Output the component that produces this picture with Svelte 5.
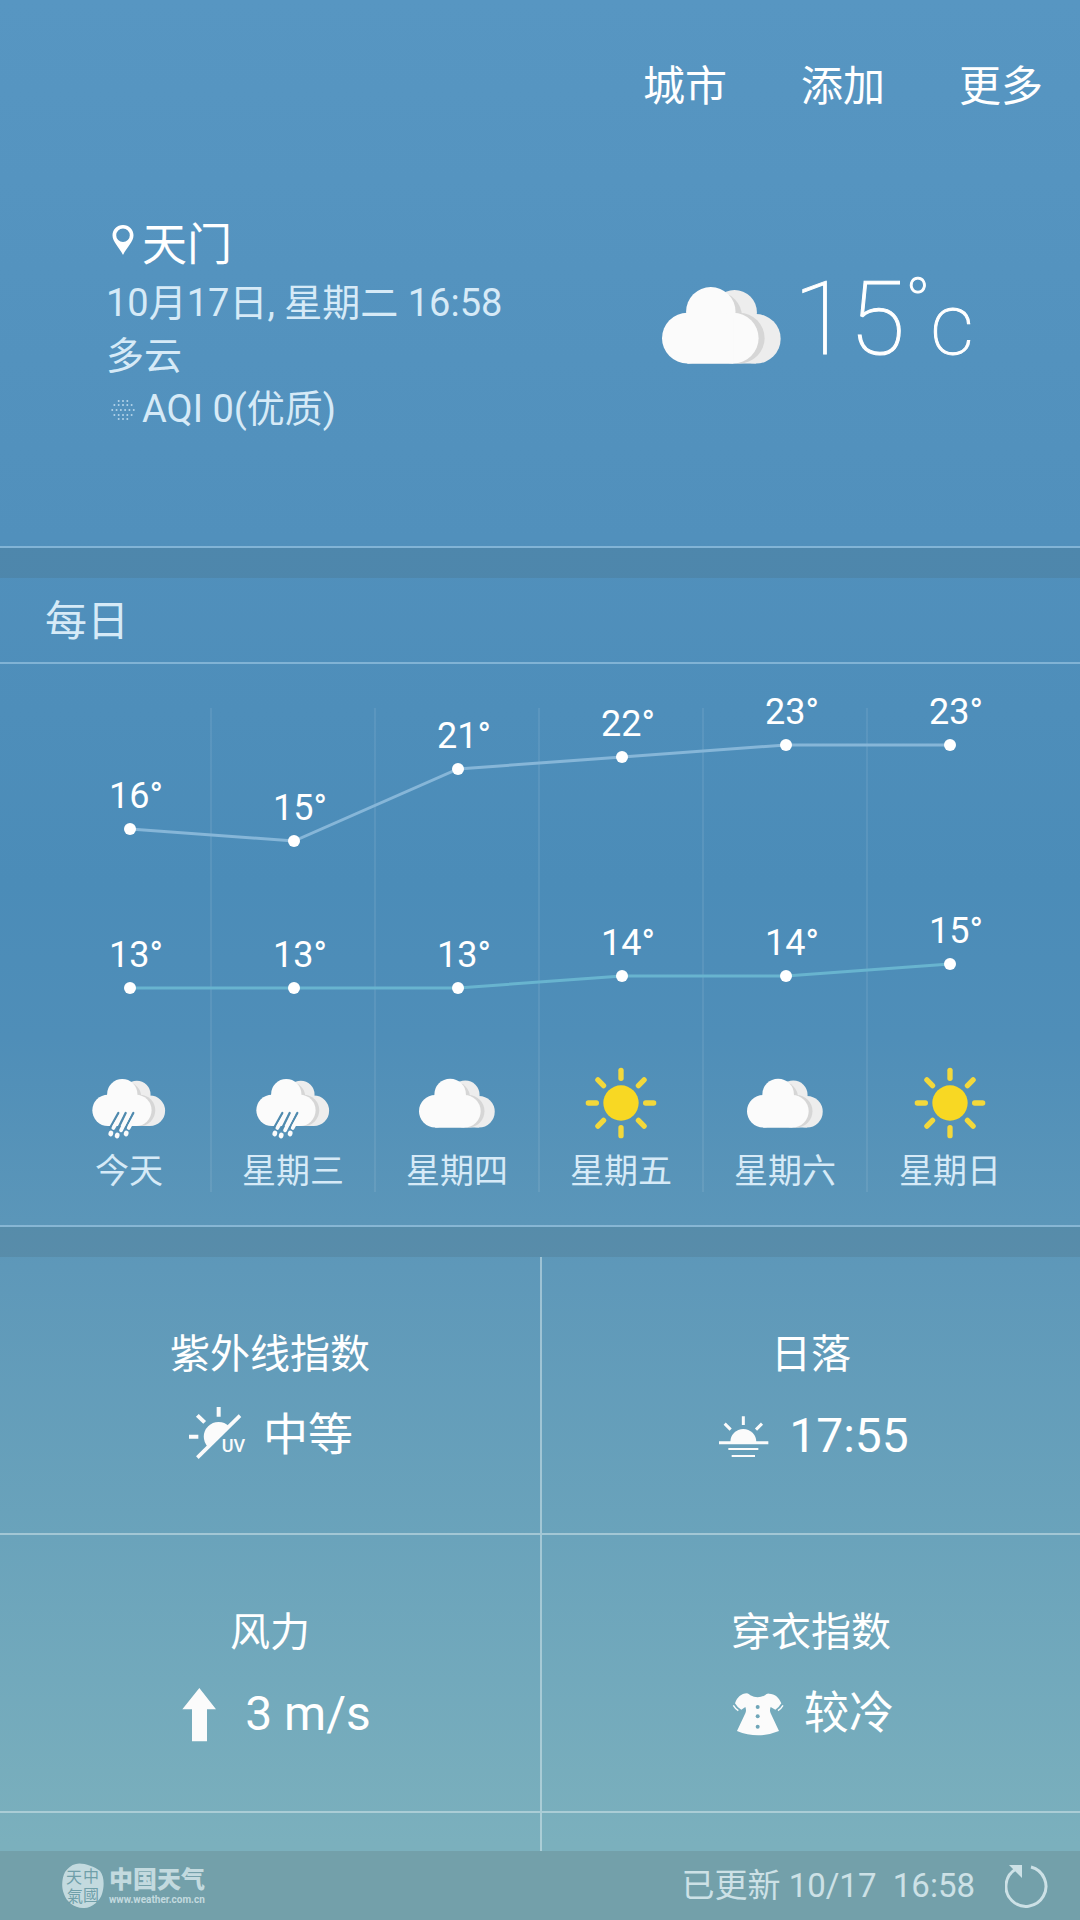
<script lang="ts">
  type Icon = 'rain' | 'cloud' | 'sun';

  const menu = ['城市', '添加', '更多'];

  const days: { name: string; icon: Icon; high: number; low: number }[] = [
    { name: '今天', icon: 'rain', high: 16, low: 13 },
    { name: '星期三', icon: 'rain', high: 15, low: 13 },
    { name: '星期四', icon: 'cloud', high: 21, low: 13 },
    { name: '星期五', icon: 'sun', high: 22, low: 14 },
    { name: '星期六', icon: 'cloud', high: 23, low: 14 },
    { name: '星期日', icon: 'sun', high: 23, low: 15 },
  ];

  const details = [
    { title: '紫外线指数', value: '中等', icon: 'uv', latin: false },
    { title: '日落', value: '17:55', icon: 'sunset', latin: true },
    { title: '风力', value: '3 m/s', icon: 'wind', latin: true },
    { title: '穿衣指数', value: '较冷', icon: 'clothes', latin: false },
  ];

  // chart geometry, in viewBox units
  const COL = 164;
  const STEP = 12;
  const x = (i: number) => COL * i + COL / 2;
  const highY = (t: number) => 165 - (t - 16) * STEP;
  const lowY = (t: number) => 324 - (t - 13) * STEP;
  const highLine = days.map((d, i) => `${x(i)},${highY(d.high)}`).join(' ');
  const lowLine = days.map((d, i) => `${x(i)},${lowY(d.low)}`).join(' ');

  // rows of the air quality dot matrix: [y, dots in the row]
  const dotRows = [[3, 3], [7, 5], [12, 6], [17, 5], [21, 3]];
</script>

{#snippet cloud()}
  <g fill="#ededed">
    <circle cx="217" cy="76" r="67" />
    <circle cx="281" cy="155" r="74" />
    <rect x="76" y="140" width="205" height="89" />
  </g>
  <g fill="#d6d6d6">
    <circle cx="166" cy="88" r="73" />
    <circle cx="231" cy="153" r="76" />
  </g>
  <g fill="#fbfbfb">
    <circle cx="146" cy="74" r="74" />
    <circle cx="76" cy="153" r="76" />
    <circle cx="213" cy="153" r="76" />
    <rect x="76" y="90" width="137" height="139" />
  </g>
{/snippet}

{#snippet dayIcon(icon: Icon)}
  <svg class="day-icon" viewBox="0 0 228 216" aria-hidden="true">
    {#if icon === 'sun'}
      <circle cx="114" cy="108" r="53" fill="#f8d823" />
      {#each [0, 45, 90, 135, 180, 225, 270, 315] as angle}
        <line x1="114" y1="10" x2="114" y2="34" stroke="#f3d83b" stroke-width="16" stroke-linecap="round" transform="rotate({angle} 114 108)" />
      {/each}
    {:else if icon === 'cloud'}
      <g transform="translate(0 35) scale(0.64)">{@render cloud()}</g>
    {:else}
      <g transform="translate(4 36) scale(0.615)">{@render cloud()}</g>
      <g fill="none" stroke-linecap="round">
        <path d="M82 138 57 183M104 138 80 187M127 138 103 183" stroke="#4f8aae" stroke-width="7" />
        <g stroke="#fbfbfb">
          <path d="M91 142 67 183M114 142 90 190M136 142 113 183" stroke-width="11" />
          <path d="M60 198 59 201M79 204 78 207M106 198 105 201" stroke-width="14" />
        </g>
      </g>
    {/if}
  </svg>
{/snippet}

<div class="app">
  <main>
    <section class="hero">
      <nav>
        {#each menu as item}
          <button type="button">{item}</button>
        {/each}
      </nav>
      <div class="current">
        <div class="info">
          <h1>
            <svg class="mark" viewBox="0 0 24 42" aria-hidden="true">
              <path fill="#fff" fill-rule="evenodd" d="M12 0C6 0 1.500 4.600 1.500 10.300 1.500 17 8 22 12 30 16 22 22.500 17 22.500 10.300 22.500 4.600 18 0 12 0ZM12 3.500A6.800 6.800 0 1 1 12 17.100 6.800 6.800 0 0 1 12 3.500Z" />
            </svg>
            天门
          </h1>
          <p>10月17日, 星期二 16:58</p>
          <p>多云</p>
          <p class="aqi">
            <svg class="mark" viewBox="0 0 24 24" aria-hidden="true">
              {#each dotRows as [y, count]}
                {#each Array(count) as _, i}
                  <circle cx={12 + (i - (count - 1) / 2) * 4.3} cy={y} r="1" fill="#b4d4ea" />
                {/each}
              {/each}
            </svg>
            AQI 0(优质)
          </p>
        </div>
        <div class="now">
          <svg class="now-icon" viewBox="0 0 356 230" role="img" aria-label="多云">{@render cloud()}</svg>
          <div class="temp">15<sup>°</sup><span>c</span></div>
        </div>
      </div>
    </section>

    <section class="daily">
      <h2>每日</h2>
      <div class="forecast">
        <svg class="chart" viewBox="0 0 984 384" role="img" aria-label="每日">
          {#each days.slice(1) as _, i}
            <line class="rule" x1={COL * (i + 1) - 1} y1="44" x2={COL * (i + 1) - 1} y2="384" />
          {/each}
          <polyline class="high" points={highLine} />
          <polyline class="low" points={lowLine} />
          {#each days as day, i}
            <circle cx={x(i)} cy={highY(day.high)} r="6" />
            <circle cx={x(i)} cy={lowY(day.low)} r="6" />
            <text x={x(i) + 6} y={highY(day.high) - 21}>{day.high}°</text>
            <text x={x(i) + 6} y={lowY(day.low) - 21}>{day.low}°</text>
          {/each}
        </svg>
        <div class="days">
          {#each days as day}
            <div class="day">
              {@render dayIcon(day.icon)}
              <span>{day.name}</span>
            </div>
          {/each}
        </div>
      </div>
    </section>

    <section class="details">
      {#each details as item}
        <div class="cell">
          <h3>{item.title}</h3>
          <div class="value" class:latin={item.latin}>
            {#if item.icon === 'uv'}
              <svg viewBox="111 285 180 180" fill="none" stroke="#fbfbfb" aria-hidden="true">
                <path d="M174 408A44 44 0 0 1 237 346Z" fill="#fbfbfb" stroke="none" />
                <path d="M142 440 270 314" stroke-width="11" />
                <path d="M206 288V317M142 313 164 334M117 377H145" stroke-width="12" />
                <text x="215" y="424">UV</text>
              </svg>
            {:else if item.icon === 'sunset'}
              <svg viewBox="72 285 180 180" fill="none" stroke="#fbfbfb" aria-hidden="true">
                <path d="M124 393A39 39 0 0 1 202 393Z" fill="#fbfbfb" stroke="none" />
                <path d="M90 395H238M163 316V342M107 338 125 356M219 338 201 356" stroke-width="9" />
                <path d="M118 414H208M128 435H198" stroke-width="6" />
              </svg>
            {:else if item.icon === 'wind'}
              <svg viewBox="57 279 180 180" aria-hidden="true">
                <polygon points="148,291 198,355 171,355 171,451 126,451 126,355 97,355" fill="#fbfbfb" />
              </svg>
            {:else}
              <svg viewBox="85 279 180 180" aria-hidden="true">
                <path d="M142 307Q148 308 152 313 174 325 196 313 201 307 208 308C226 309 237 318 245 337Q238 349 227 356L213 348Q209 358 213 367L238 420Q175 446 112 420L137 367Q141 358 137 348L125 356Q113 350 106 337C113 318 124 308 142 307Z" fill="#fbfbfb" />
                <path d="M101 343Q106 352 116 359M250 343Q245 352 235 359" fill="none" stroke="#fbfbfb" stroke-width="4" />
                <g fill="#6fa6b9">
                  <circle cx="174" cy="348" r="6" />
                  <circle cx="174" cy="376" r="6" />
                  <circle cx="174" cy="407" r="6" />
                </g>
              </svg>
            {/if}
            <span>{item.value}</span>
          </div>
        </div>
      {/each}
      <div class="cell"></div>
      <div class="cell"></div>
    </section>
  </main>

  <footer>
    <a class="brand" href="#weather">
      <svg viewBox="0 0 42 46" aria-hidden="true">
        <path d="M14 1C19-1 32 3 38 8 43 14 42 25 40 31 38 38 29 46 21 45 12 45 4 38 2 31-1 24 0 15 3 9 6 5 9 2 14 1Z" fill="#c3dadf" />
        <g fill="#6f9fa9">
          <text x="4" y="20">天</text>
          <text x="21" y="19">中</text>
          <text x="5" y="39">氣</text>
          <text x="21" y="38">國</text>
        </g>
      </svg>
      <span class="brand-text">
        <strong>中国天气</strong>
        <small>www.weather.com.cn</small>
      </span>
    </a>
    <div class="updated">已更新 10/17&nbsp; 16:58</div>
    <button type="button" class="refresh" aria-label="刷新">
      <svg viewBox="0 0 44 44" aria-hidden="true">
        <path d="M26 3A20 20 0 1 1 11 5" fill="none" stroke="#cde1e6" stroke-width="3" />
        <path d="M4 1H17V14Z" fill="#cde1e6" />
      </svg>
    </button>
  </footer>
</div>

<style>
  :global(body) {
    margin: 0;
  }

  .app {
    --line: rgba(180, 215, 240, 0.5);
    --soft: #d6eaf7;
    display: flex;
    flex-direction: column;
    height: 100vh;
    overflow: hidden;
    color: #fff;
    font-family: Roboto, 'Noto Sans CJK SC', sans-serif;
    background: linear-gradient(
      #5796c2 0%,
      #5190bc 28%,
      #4b8cb8 46%,
      #4f8eb8 54%,
      #5e98b9 66%,
      #6aa3bb 80%,
      #7bb0bd 96%
    );
  }

  main {
    display: flex;
    flex-direction: column;
    flex: 1;
    min-height: 0;
    overflow: hidden;
  }

  section {
    flex-shrink: 0;
  }

  h1, h2, h3, p {
    margin: 0;
    font-weight: 400;
  }

  button {
    padding: 0;
    border: none;
    background: none;
    color: inherit;
    font: inherit;
    cursor: pointer;
  }

  svg {
    display: block;
  }

  /* Current weather */
  .hero {
    padding-bottom: 110px;
    border-bottom: 2px solid var(--line);
  }

  nav {
    display: flex;
    justify-content: flex-end;
    gap: 74px;
    padding: 62px 37px 103px;
    font-size: 42px;
    line-height: 50px;
  }

  .current {
    display: flex;
    align-items: center;
    justify-content: space-between;
    padding: 0 106px;
  }

  .info {
    color: var(--soft);
    font-size: 38px;
    line-height: 53px;
    white-space: nowrap;
  }

  .info h1,
  .aqi {
    display: flex;
    align-items: center;
    gap: 7px;
  }

  .info h1 {
    color: #fff;
    font-size: 45px;
    line-height: 62px;
  }

  .mark {
    width: 24px;
    margin-left: 5px;
  }

  .now {
    display: flex;
    align-items: center;
    gap: 12px;
  }

  .now-icon {
    width: 119px;
  }

  .temp {
    padding-bottom: 14px;
    font-size: 102px;
    font-weight: 100;
    line-height: 112px;
    white-space: nowrap;
    -webkit-text-stroke: 1px #fff;
  }

  .temp sup,
  .temp span {
    line-height: 1;
  }

  .temp sup {
    font-size: 66px;
    vertical-align: 28px;
  }

  .temp span {
    font-size: 86px;
  }

  /* Daily forecast */
  .daily {
    border-top: 30px solid rgba(70, 100, 110, 0.2);
    border-bottom: 2px solid var(--line);
  }

  .daily h2 {
    padding: 4px 45px 0;
    border-bottom: 2px solid var(--line);
    color: var(--soft);
    font-size: 42px;
    line-height: 80px;
  }

  .forecast {
    padding: 0 48px 33px;
  }

  .chart {
    width: 100%;
    fill: #fff;
  }

  .chart text {
    font-size: 36px;
    text-anchor: middle;
  }

  .chart polyline {
    fill: none;
    stroke-width: 3;
  }

  .high { stroke: #86b6d8; }
  .low { stroke: #68b4cf; }

  .rule {
    stroke: rgba(255, 255, 255, 0.08);
    stroke-width: 2;
  }

  .days {
    display: grid;
    grid-template-columns: repeat(6, 1fr);
  }

  .day {
    display: flex;
    flex-direction: column;
    align-items: center;
    gap: 11px;
    padding-top: 19px;
    color: var(--soft);
    font-size: 34px;
    line-height: 42px;
  }

  .day:not(:last-child) {
    border-right: 2px solid rgba(255, 255, 255, 0.08);
  }

  .day-icon {
    width: 76px;
    height: 72px;
  }

  /* Details */
  .details {
    display: grid;
    grid-template-columns: 1fr 1fr;
    border-top: 30px solid rgba(70, 100, 110, 0.2);
  }

  .cell {
    box-sizing: border-box;
    height: 278px;
    padding-top: 74px;
    border-bottom: 2px solid rgba(220, 235, 240, 0.5);
    text-align: center;
  }

  .cell:nth-child(even) {
    border-left: 2px solid rgba(220, 235, 240, 0.5);
  }

  .cell h3 {
    font-size: 40px;
    line-height: 48px;
  }

  .value {
    display: flex;
    align-items: center;
    justify-content: center;
    gap: 16px;
    margin-top: 27px;
    font-size: 45px;
    line-height: 60px;
  }

  .value.latin {
    font-size: 48px;
  }

  .value svg {
    width: 60px;
    height: 60px;
  }

  .value text {
    fill: #fbfbfb;
    stroke: none;
    font-size: 54px;
    font-weight: 500;
  }

  /* Status bar */
  footer {
    display: flex;
    align-items: center;
    height: 69px;
    padding: 0 31px 0 62px;
    background: rgba(90, 110, 115, 0.25);
    color: #cde1e6;
  }

  .brand {
    display: flex;
    align-items: center;
    gap: 5px;
    color: #c3dadf;
    text-decoration: none;
  }

  .brand svg {
    width: 42px;
    height: 46px;
  }

  .brand svg text {
    font-size: 16px;
  }

  .brand-text {
    display: flex;
    flex-direction: column;
  }

  .brand strong {
    font-size: 24px;
    font-weight: 900;
    line-height: 28px;
  }

  .brand small {
    font-size: 10px;
    font-weight: 700;
    line-height: 12px;
  }

  .updated {
    margin-left: auto;
    font-size: 33px;
    line-height: 44px;
  }

  .refresh {
    margin-left: 30px;
  }

  .refresh svg {
    width: 44px;
    height: 44px;
  }
</style>
